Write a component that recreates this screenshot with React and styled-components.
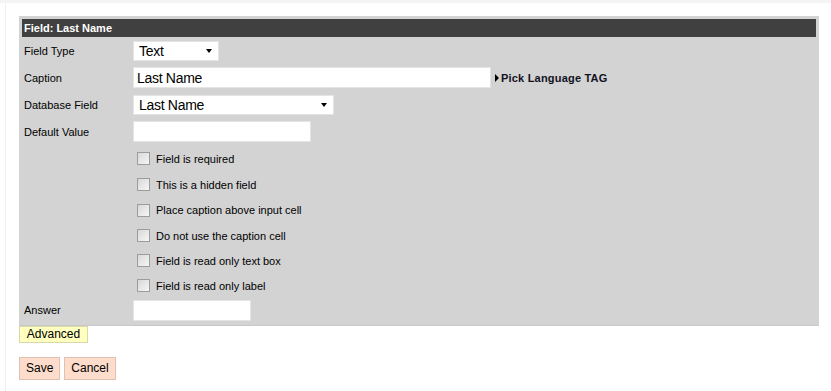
import React from "react";
import styled, { createGlobalStyle } from "styled-components";

const GlobalStyle = createGlobalStyle`
  body {
    margin: 0;
    background: #fff;
    font-family: "Liberation Sans", Arial, sans-serif;
  }
`;

const checkboxes = [
  { label: "Field is required", height: 27 },
  { label: "This is a hidden field", height: 25 },
  { label: "Place caption above input cell", height: 26 },
  { label: "Do not use the caption cell", height: 25 },
  { label: "Field is read only text box", height: 25 },
  { label: "Field is read only label", height: 25 },
];

export default function App() {
  return (
    <>
      <GlobalStyle />
      <TopStrip />
      <Page>
        <Panel>
          <Header>Field: Last Name</Header>
          <Row height={27}>
            <Label>Field Type</Label>
            <Select width={86}>
              <span>Text</span>
              <Arrow />
            </Select>
          </Row>
          <Row height={27}>
            <Label>Caption</Label>
            <Cell>
              <TextInput width={358}>Last Name</TextInput>
              <LanguageLink>
                <Triangle />
                Pick Language TAG
              </LanguageLink>
            </Cell>
          </Row>
          <Row height={27}>
            <Label>Database Field</Label>
            <Select width={201}>
              <span>Last Name</span>
              <Arrow />
            </Select>
          </Row>
          <Row height={27}>
            <Label>Default Value</Label>
            <TextInput width={178} />
          </Row>
          {checkboxes.map((c) => (
            <Row key={c.label} height={c.height}>
              <span />
              <CheckLine>
                <Box />
                <CheckText>{c.label}</CheckText>
              </CheckLine>
            </Row>
          ))}
          <Row height={24}>
            <Label>Answer</Label>
            <TextInput width={118} />
          </Row>
        </Panel>
        <AdvancedButton>Advanced</AdvancedButton>
        <Actions>
          <ActionButton>Save</ActionButton>
          <ActionButton>Cancel</ActionButton>
        </Actions>
      </Page>
    </>
  );
}

const TopStrip = styled.div`
  height: 3px;
  background: #f4f4f4;
`;

const Page = styled.div`
  margin-left: 5px;
  border-left: 1px solid #f0f0f0;
  padding: 13px 0 11px 13px;
`;

const Panel = styled.div`
  width: 794px;
  background: #d3d3d3;
  padding: 3px 3px 3px 3px;
  border-bottom: 1px solid #c8c8c8;
`;

const Header = styled.div`
  height: 18px;
  line-height: 18px;
  background: #404040;
  color: #fff;
  font-weight: bold;
  font-size: 11px;
  padding-left: 2px;
`;

const Row = styled.div`
  display: grid;
  grid-template-columns: 111px 1fr;
  align-items: center;
  height: ${(p) => p.height}px;
`;

const Label = styled.div`
  font-size: 11px;
  color: #000;
  padding-left: 2px;
`;

const Cell = styled.div`
  display: flex;
  align-items: center;
`;

const fieldBox = `
  box-sizing: border-box;
  background: #fff;
  border: 1px solid #e4e4e4;
  font-size: 14px;
  letter-spacing: -0.3px;
  color: #000;
  display: flex;
  align-items: center;
`;

const TextInput = styled.div`
  ${fieldBox}
  width: ${(p) => p.width}px;
  height: 21px;
  padding-left: 3px;
`;

const Select = styled.div`
  ${fieldBox}
  width: ${(p) => p.width}px;
  height: 20px;
  padding: 0 6px 0 5px;
  justify-content: space-between;
`;

const Arrow = styled.span`
  width: 0;
  height: 0;
  border-left: 3.5px solid transparent;
  border-right: 3.5px solid transparent;
  border-top: 4px solid #000;
`;

const LanguageLink = styled.div`
  display: flex;
  align-items: center;
  margin-left: 4px;
  font-size: 11px;
  font-weight: bold;
  letter-spacing: 0.2px;
  color: #111122;
`;

const Triangle = styled.span`
  width: 0;
  height: 0;
  border-top: 4px solid transparent;
  border-bottom: 4px solid transparent;
  border-left: 4px solid #000;
  margin-right: 2px;
`;

const CheckLine = styled.div`
  display: flex;
  align-items: center;
  padding-left: 4px;
`;

const Box = styled.span`
  box-sizing: border-box;
  width: 13px;
  height: 13px;
  border: 1px solid #9c9c9c;
  background: linear-gradient(135deg, #d8d8d8, #f6f6f6);
`;

const CheckText = styled.span`
  font-size: 11px;
  margin-left: 6px;
  color: #000;
`;

const AdvancedButton = styled.div`
  box-sizing: border-box;
  width: 69px;
  height: 17px;
  background: #ffffc0;
  border: 1px solid #d8d8a8;
  font-size: 12px;
  line-height: 15px;
  text-align: center;
  color: #000;
`;

const Actions = styled.div`
  display: flex;
  gap: 4px;
  margin-top: 14px;
`;

const ActionButton = styled.div`
  box-sizing: border-box;
  height: 23px;
  padding: 0 6px;
  background: #fddccb;
  border: 1px solid #e0c0b0;
  font-size: 12px;
  line-height: 21px;
  color: #000;
`;
